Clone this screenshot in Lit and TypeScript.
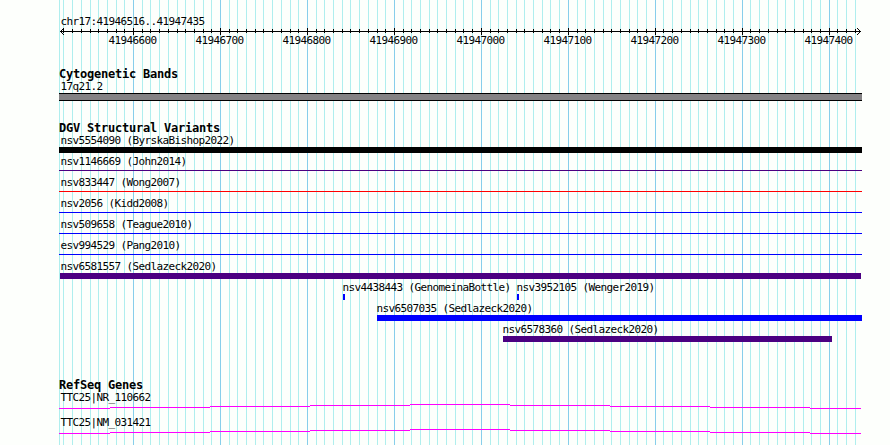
import { LitElement, html, css, svg } from 'lit';
import { customElement, property } from 'lit/decorators.js';

const REGION_START = 41946516;
const REGION_END = 41947435;
const PIXELS_PER_BASE = 800 / 920;
const LEFT = 60;
const HEIGHT = 445;

interface Feature {
  label: string;
  labelX: number;
  x: number;
  width: number;
  color: string;
  thin?: boolean;
}

const toPixel = (base: number) => Math.round(LEFT + (base - REGION_START) * PIXELS_PER_BASE);

const ticks: { base: number; x: number; major: boolean }[] = [];
for (let base = Math.ceil(REGION_START / 10) * 10; base <= REGION_END; base += 10) {
  ticks.push({ base, x: toPixel(base), major: base % 100 === 0 });
}

const variants: Feature[][] = [
  [{ label: 'nsv5554090 (ByrskaBishop2022)', labelX: 60.4, x: 59, width: 803, color: '#000000' }],
  [{ label: 'nsv1146669 (John2014)', labelX: 60.4, x: 59, width: 803, color: '#4b0082', thin: true }],
  [{ label: 'nsv833447 (Wong2007)', labelX: 60.4, x: 59, width: 803, color: '#ff0000', thin: true }],
  [{ label: 'nsv2056 (Kidd2008)', labelX: 60.4, x: 59, width: 803, color: '#0000ff', thin: true }],
  [{ label: 'nsv509658 (Teague2010)', labelX: 60.4, x: 59, width: 803, color: '#0000ff', thin: true }],
  [{ label: 'esv994529 (Pang2010)', labelX: 60.4, x: 59, width: 803, color: '#0000ff', thin: true }],
  [{ label: 'nsv6581557 (Sedlazeck2020)', labelX: 60.4, x: 60, width: 801, color: '#4b0082' }],
  [
    { label: 'nsv4438443 (GenomeinaBottle)', labelX: 342.4, x: 343, width: 2, color: '#0000ff' },
    { label: 'nsv3952105 (Wenger2019)', labelX: 516.4, x: 517, width: 2, color: '#0000ff' },
  ],
  [{ label: 'nsv6507035 (Sedlazeck2020)', labelX: 376.4, x: 377, width: 485, color: '#0000ff' }],
  [{ label: 'nsv6578360 (Sedlazeck2020)', labelX: 502.4, x: 503, width: 329, color: '#4b0082' }],
];

@customElement('genome-ruler')
class GenomeRuler extends LitElement {
  static styles = css`
    :host {
      display: block;
      height: 19px;
    }

    svg {
      display: block;
      shape-rendering: crispEdges;
    }

    text {
      font: 11px 'DejaVu Sans Mono', monospace;
      letter-spacing: -0.62px;
    }
  `;

  render() {
    return html`
      <svg width="890" height="19" viewBox="0 27 890 19">
        <rect x="60" y="31" width="801" height="1" />
        ${ticks.map((t) => svg`
          <rect x=${t.x} y=${t.major ? 28 : 29} width="1" height=${t.major ? 7 : 4} />
          ${t.major ? svg`<text x=${t.x - 24.5} y="44">${t.base}</text>` : ''}
        `)}
        ${[0, 1, 2, 3].map((i) => svg`
          <rect x=${60 + i} y=${31 - i} width="1" height="1" />
          <rect x=${60 + i} y=${31 + i} width="1" height="1" />
          <rect x=${860 - i} y=${31 - i} width="1" height="1" />
          <rect x=${860 - i} y=${31 + i} width="1" height="1" />
        `)}
      </svg>
    `;
  }
}

@customElement('variant-lane')
class VariantLane extends LitElement {
  @property({ attribute: false }) features: Feature[] = [];

  static styles = css`
    :host {
      display: block;
      height: 21px;
    }

    .labels,
    .bars {
      display: flex;
    }

    .labels {
      height: 12px;
      line-height: 11px;
    }

    .bars {
      height: 6px;
    }

    .slot {
      width: 0;
      flex: none;
      white-space: nowrap;
    }

    .bar {
      height: 6px;
    }

    .bar--thin {
      height: 1px;
      margin-top: 2px;
    }
  `;

  // Slots have no width, so each one is offset from where the previous one starts.
  render() {
    const f = this.features;
    return html`
      <div class="labels">
        ${f.map((item, i) => html`
          <div class="slot" style="margin-left: ${item.labelX - (f[i - 1]?.labelX ?? 0)}px">${item.label}</div>
        `)}
      </div>
      <div class="bars">
        ${f.map((item, i) => html`
          <div class="slot" style="margin-left: ${item.x - (f[i - 1]?.x ?? 0)}px">
            <div
              class="bar ${item.thin ? 'bar--thin' : ''}"
              style="width: ${item.width}px; background: ${item.color}"
            ></div>
          </div>
        `)}
      </div>
    `;
  }
}

@customElement('gene-lane')
class GeneLane extends LitElement {
  @property() label = '';

  static styles = css`
    :host {
      display: block;
      height: 25px;
    }

    .label {
      height: 12px;
      line-height: 11px;
      padding-left: 60.4px;
    }

    svg {
      display: block;
      shape-rendering: crispEdges;
    }
  `;

  render() {
    const edges = [59, 110, 210, 310, 410, 510, 610, 710, 810, 861];
    const rows = [4, 3, 2, 1, 0, 1, 2, 3, 4];
    return html`
      <div class="label">${this.label}</div>
      <svg width="890" height="5">
        ${rows.map((y, i) => svg`
          <rect x=${edges[i]} y=${y} width=${edges[i + 1] - edges[i]} height="1" fill="#ff00ff" />
        `)}
      </svg>
    `;
  }
}

@customElement('app-root')
class AppRoot extends LitElement {
  static styles = css`
    :host {
      display: block;
      position: relative;
      width: 890px;
      height: 445px;
      overflow: hidden;
      background: #fdfffc;
      color: #000;
      font: 11px/13px 'DejaVu Sans Mono', monospace;
      letter-spacing: -0.62px;
    }

    .grid {
      position: absolute;
      top: 0;
      left: 0;
      shape-rendering: crispEdges;
    }

    .content {
      position: relative;
      display: flex;
      flex-direction: column;
      padding-top: 15px;
    }

    .region {
      height: 12px;
      padding-left: 60.4px;
    }

    .track--cytoband {
      padding-top: 23px;
    }

    .track--variants {
      padding-top: 22px;
    }

    .track--genes {
      padding-top: 35px;
    }

    .track__title {
      height: 12px;
      padding-left: 59px;
      font-size: 12px;
      line-height: 10px;
      font-weight: bold;
      letter-spacing: -0.225px;
    }

    .track__label {
      height: 12px;
      line-height: 11px;
      padding-left: 60.4px;
    }

    .band {
      box-sizing: border-box;
      width: 803px;
      height: 8px;
      margin-left: 59px;
      border: solid #000;
      border-width: 1px 0;
      background: #848284;
    }
  `;

  render() {
    return html`
      <svg class="grid" width="890" height=${HEIGHT}>
        <rect x="59" y="0" width="1" height=${HEIGHT} fill="#afeeee" />
        ${ticks.map((t) => svg`
          <rect x=${t.x} y="0" width="1" height=${HEIGHT} fill=${t.major ? '#87ceeb' : '#afeeee'} />
        `)}
      </svg>
      <div class="content">
        <div class="region">chr17:${REGION_START}..${REGION_END}</div>
        <genome-ruler></genome-ruler>
        <section class="track--cytoband">
          <div class="track__title">Cytogenetic Bands</div>
          <div class="track__label">17q21.2</div>
          <div class="band"></div>
        </section>
        <section class="track--variants">
          <div class="track__title">DGV Structural Variants</div>
          ${variants.map((lane) => html`<variant-lane .features=${lane}></variant-lane>`)}
        </section>
        <section class="track--genes">
          <div class="track__title">RefSeq Genes</div>
          <gene-lane label="TTC25|NR_110662"></gene-lane>
          <gene-lane label="TTC25|NM_031421"></gene-lane>
        </section>
      </div>
    `;
  }
}
